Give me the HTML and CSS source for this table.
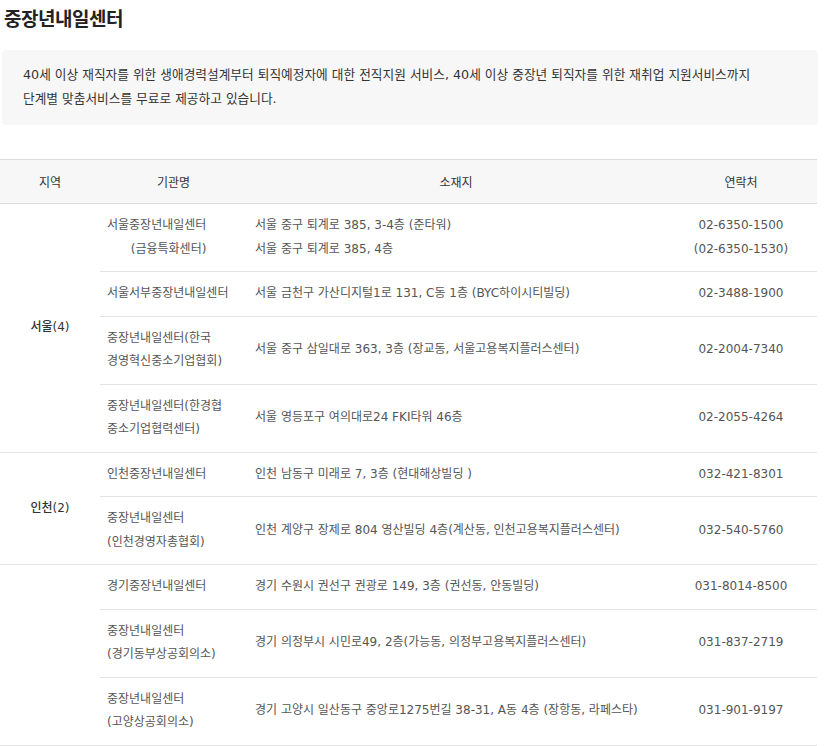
FILE: index.html
```html
<!DOCTYPE html>
<html lang="ko">
<head>
<meta charset="utf-8">
<link rel="stylesheet" href="styles.css">
</head>
<body>
<div class="page">
  <h2 class="title">중장년내일센터</h2>
  <div class="info">
    <p>40세 이상 재직자를 위한 생애경력설계부터 퇴직예정자에 대한 전직지원 서비스, 40세 이상 중장년 퇴직자를 위한 재취업 지원서비스까지<br>단계별 맞춤서비스를 무료로 제공하고 있습니다.</p>
  </div>
  <table class="centers">
    <colgroup>
      <col class="c-region">
      <col class="c-name">
      <col class="c-addr">
      <col class="c-tel">
    </colgroup>
    <thead>
      <tr>
        <th>지역</th>
        <th>기관명</th>
        <th>소재지</th>
        <th>연락처</th>
      </tr>
    </thead>
    <tbody>
      <tr>
        <td class="region" rowspan="4">서울(4)</td>
        <td class="name"><span class="ralign">서울중장년내일센터<br>(금융특화센터)</span></td>
        <td class="addr">서울 중구 퇴계로 385, 3-4층 (준타워)<br>서울 중구 퇴계로 385, 4층</td>
        <td class="tel">02-6350-1500<br>(02-6350-1530)</td>
      </tr>
      <tr>
        <td class="name">서울서부중장년내일센터</td>
        <td class="addr">서울 금천구 가산디지털1로 131, C동 1층 (BYC하이시티빌딩)</td>
        <td class="tel">02-3488-1900</td>
      </tr>
      <tr>
        <td class="name">중장년내일센터(한국<br>경영혁신중소기업협회)</td>
        <td class="addr">서울 중구 삼일대로 363, 3층 (장교동, 서울고용복지플러스센터)</td>
        <td class="tel">02-2004-7340</td>
      </tr>
      <tr>
        <td class="name">중장년내일센터(한경협<br>중소기업협력센터)</td>
        <td class="addr">서울 영등포구 여의대로24 FKI타워 46층</td>
        <td class="tel">02-2055-4264</td>
      </tr>
      <tr>
        <td class="region" rowspan="2">인천(2)</td>
        <td class="name">인천중장년내일센터</td>
        <td class="addr">인천 남동구 미래로 7, 3층 (현대해상빌딩 )</td>
        <td class="tel">032-421-8301</td>
      </tr>
      <tr>
        <td class="name">중장년내일센터<br>(인천경영자총협회)</td>
        <td class="addr">인천 계양구 장제로 804 영산빌딩 4층(계산동, 인천고용복지플러스센터)</td>
        <td class="tel">032-540-5760</td>
      </tr>
      <tr>
        <td class="region" rowspan="3"></td>
        <td class="name">경기중장년내일센터</td>
        <td class="addr">경기 수원시 권선구 권광로 149, 3층 (권선동, 안동빌딩)</td>
        <td class="tel">031-8014-8500</td>
      </tr>
      <tr>
        <td class="name">중장년내일센터<br>(경기동부상공회의소)</td>
        <td class="addr">경기 의정부시 시민로49, 2층(가능동, 의정부고용복지플러스센터)</td>
        <td class="tel">031-837-2719</td>
      </tr>
      <tr>
        <td class="name">중장년내일센터<br>(고양상공회의소)</td>
        <td class="addr">경기 고양시 일산동구 중앙로1275번길 38-31, A동 4층 (장항동, 라페스타)</td>
        <td class="tel">031-901-9197</td>
      </tr>
    </tbody>
  </table>
</div>
</body>
</html>
```
FILE: styles.css
```css
html, body {
  margin: 0;
  padding: 0;
  background: #fff;
}
body {
  font-family: "DejaVu Sans", "Noto Sans CJK KR", sans-serif;
  color: #555;
  font-size: 12px;
}
.page {
  width: 818px;
  padding-top: 4px;
}
.title {
  margin: 0 0 0 4px;
  font-family: "Noto Sans CJK KR", sans-serif;
  font-size: 19px;
  line-height: 28px;
  font-weight: 700;
  color: #222;
  letter-spacing: -0.5px;
}
.info {
  margin: 18px 0 0 2px;
  background: #f7f7f7;
  border-radius: 4px;
  padding: 13px 21px 14px;
}
.info p {
  margin: 0;
  font-size: 12.7px;
  line-height: 24px;
  color: #333;
}
.centers {
  margin-top: 34px;
  width: 817px;
  border-collapse: collapse;
  table-layout: fixed;
}
.c-region { width: 100px; }
.c-name { width: 147px; }
.c-addr { width: 418px; }
.c-tel { width: 152px; }
.centers th {
  background: #f7f7f7;
  border-top: 1px solid #dcdcdc;
  border-bottom: 1px solid #dcdcdc;
  font-weight: 400;
  color: #333;
  height: 43px;
  padding: 0;
  text-align: center;
  font-size: 12px;
}
.centers td {
  border-bottom: 1px solid #e3e3e3;
  padding: 10px 0;
  line-height: 23.5px;
  vertical-align: middle;
  font-size: 12px;
}
.centers td.region {
  text-align: center;
  font-weight: 500;
  color: #333;
}
.centers td.name { padding-left: 7px; }
.centers td.addr { padding-left: 8px; }
.centers td.tel { text-align: center; }
.ralign {
  display: inline-block;
  text-align: right;
}
```
